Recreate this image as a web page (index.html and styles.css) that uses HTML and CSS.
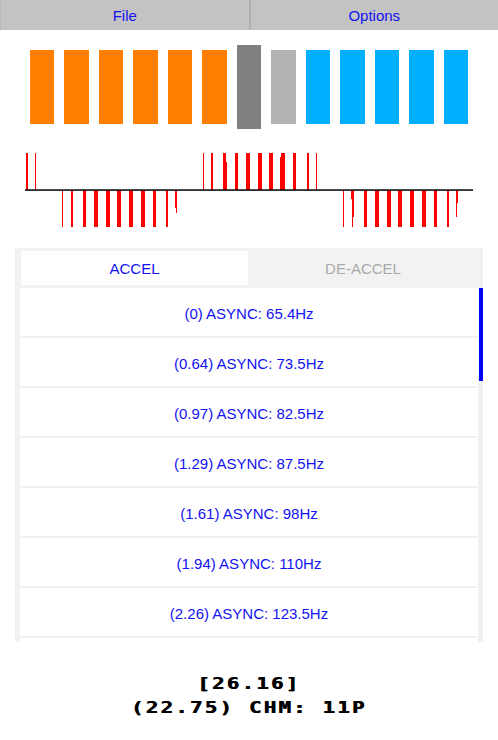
FILE: index.html
```html
<!DOCTYPE html>
<html>
<head>
<meta charset="utf-8">
<link rel="stylesheet" href="styles.css">
</head>
<body>
<div class="menubar">
  <div class="menu-btn first">File</div>
  <div class="menu-btn second">Options</div>
</div>

<div class="notches">
  <div class="notch orange"></div>
  <div class="notch orange"></div>
  <div class="notch orange"></div>
  <div class="notch orange"></div>
  <div class="notch orange"></div>
  <div class="notch orange"></div>
  <div class="notch current"></div>
  <div class="notch neutral"></div>
  <div class="notch blue"></div>
  <div class="notch blue"></div>
  <div class="notch blue"></div>
  <div class="notch blue"></div>
  <div class="notch blue"></div>
</div>

<svg class="wave" width="498" height="119" viewBox="0 129 498 119">
  <g fill="#ff0000">
    <rect x="26" y="153" width="2" height="37"/>
    <rect x="35" y="153" width="1" height="37"/>

    <rect x="62" y="190" width="1" height="37"/>
    <rect x="71" y="190" width="2" height="37"/>
    <rect x="83" y="190" width="3" height="37"/>
    <rect x="94" y="190" width="4" height="37"/>
    <rect x="106" y="190" width="4" height="37"/>
    <rect x="117" y="190" width="4" height="37"/>
    <rect x="129" y="190" width="4" height="37"/>
    <rect x="141" y="190" width="4" height="37"/>
    <rect x="153" y="190" width="3" height="37"/>
    <rect x="166" y="190" width="2" height="37"/>
    <rect x="175" y="190" width="1" height="18"/>
    <rect x="176" y="190" width="1" height="23"/>

    <rect x="203" y="153" width="1" height="37"/>
    <rect x="211" y="153" width="2" height="37"/>
    <rect x="223" y="153" width="3" height="37"/>
    <rect x="226" y="162" width="1" height="28"/>
    <rect x="235" y="153" width="3" height="37"/>
    <rect x="246" y="153" width="4" height="37"/>
    <rect x="258" y="153" width="4" height="37"/>
    <rect x="269" y="153" width="4" height="37"/>
    <rect x="281" y="153" width="4" height="37"/>
    <rect x="280" y="157" width="1" height="33"/>
    <rect x="293" y="153" width="3" height="37"/>
    <rect x="307" y="153" width="2" height="37"/>
    <rect x="316" y="153" width="1" height="37"/>

    <rect x="343" y="190" width="1" height="37"/>
    <rect x="351" y="190" width="3" height="9"/>
    <rect x="352" y="190" width="1" height="37"/>
    <rect x="353" y="190" width="1" height="27"/>
    <rect x="364" y="190" width="3" height="37"/>
    <rect x="375" y="190" width="4" height="37"/>
    <rect x="387" y="190" width="4" height="37"/>
    <rect x="398" y="190" width="4" height="37"/>
    <rect x="410" y="190" width="4" height="37"/>
    <rect x="422" y="190" width="4" height="37"/>
    <rect x="434" y="190" width="3" height="37"/>
    <rect x="447" y="190" width="2" height="37"/>
    <rect x="456" y="190" width="2" height="13"/>
    <rect x="456" y="190" width="1" height="27"/>
  </g>
  <rect x="25" y="189.3" width="448" height="1.5" fill="#000"/>
</svg>

<div class="panel">
  <div class="tabs">
    <div class="tab active">ACCEL</div>
    <div class="tab">DE-ACCEL</div>
  </div>
  <div class="list-wrap">
    <div class="list">
      <div class="item">(0) ASYNC: 65.4Hz</div>
      <div class="item">(0.64) ASYNC: 73.5Hz</div>
      <div class="item">(0.97) ASYNC: 82.5Hz</div>
      <div class="item">(1.29) ASYNC: 87.5Hz</div>
      <div class="item">(1.61) ASYNC: 98Hz</div>
      <div class="item">(1.94) ASYNC: 110Hz</div>
      <div class="item">(2.26) ASYNC: 123.5Hz</div>
      <div class="item tail"></div>
    </div>
    <div class="track">
      <div class="thumb"></div>
    </div>
  </div>
</div>

<div class="readout">
  <div class="line">[26.16]</div>
  <div class="line">(22.75) CHM: 11P</div>
</div>
</body>
</html>
```

FILE: styles.css
```css
html, body {
  margin: 0;
  padding: 0;
  background: #ffffff;
}

body {
  width: 498px;
  height: 740px;
  overflow: hidden;
  font-family: "Liberation Sans", Arial, sans-serif;
}

.menubar {
  display: flex;
  height: 30px;
  background: #c3c3c3;
}

.menu-btn {
  flex: 1;
  display: flex;
  align-items: center;
  justify-content: center;
  font-size: 15px;
  color: #1414f0;
  padding-top: 1px;
  box-sizing: border-box;
}

.menu-btn.first {
  border-left: 1px solid #b9b9b9;
}

.menu-btn.second {
  border-left: 2px solid #b0b0b0;
}

.notches {
  display: flex;
  align-items: center;
  gap: 10px;
  width: 438px;
  height: 84px;
  margin: 15px auto 0;
}

.notch {
  flex: 1;
  height: 74px;
}

.notch.orange { background: #ff8000; }
.notch.current { background: #808080; height: 84px; }
.notch.neutral { background: #b3b3b3; }
.notch.blue { background: #00b0ff; }

.wave {
  display: block;
}

.panel {
  margin: 0 15px;
  background: #f2f2f2;
  padding: 3px 0 0 5px;
  display: flex;
  flex-direction: column;
  gap: 3px;
}

.tabs {
  display: grid;
  grid-template-columns: 227px 230px;
  margin-left: 1px;
  height: 34px;
}

.tab {
  display: flex;
  align-items: center;
  justify-content: center;
  font-size: 15px;
  color: #aaaaaa;
}

.tab.active {
  background: #ffffff;
  color: #1414f0;
}

.list-wrap {
  display: flex;
  height: 354px;
}

.list {
  flex: 1;
  overflow: hidden;
}

.track {
  width: 5px;
  background: #f2f2f2;
  display: flex;
  justify-content: flex-end;
}

.thumb {
  width: 4px;
  height: 93px;
  background: #0000ff;
}

.item {
  height: 50px;
  border-bottom: 2px solid #f2f2f2;
  background: #ffffff;
  display: flex;
  align-items: center;
  justify-content: center;
  font-size: 15px;
  color: #1212f2;
  padding-top: 2px;
  box-sizing: border-box;
}

.item.tail {
  border-bottom: none;
}

.readout {
  margin-top: 30px;
  display: flex;
  flex-direction: column;
  align-items: center;
}

.readout .line {
  font-family: "DejaVu Sans Mono", monospace;
  font-weight: bold;
  font-size: 16px;
  line-height: 24px;
  letter-spacing: 1.7px;
  color: #000;
  text-shadow: 0.6px 0 0 #000;
  transform: scaleX(1.3);
  white-space: pre;
}
```
